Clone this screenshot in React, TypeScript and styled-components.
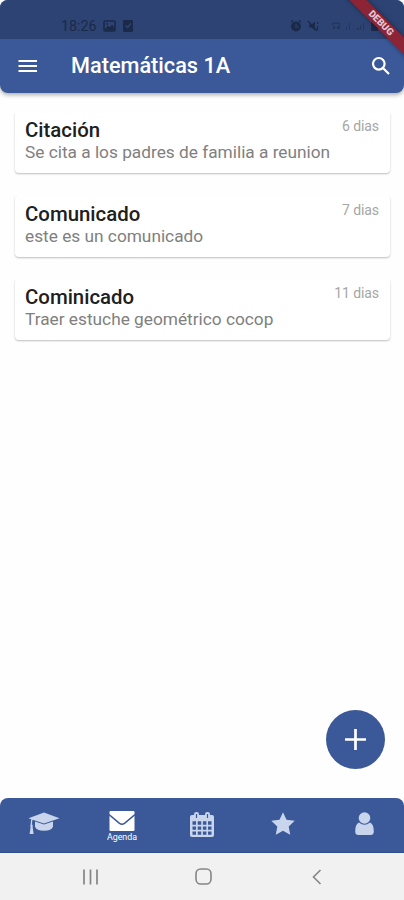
import React from 'react';
import styled, { createGlobalStyle } from 'styled-components';

const blue = '#3b5998';
const pale = '#c9d5ec';

const GlobalStyle = createGlobalStyle`
  * { box-sizing: border-box; }
  html, body { margin: 0; background: #fefefe; }
  body { font-family: Roboto, "Liberation Sans", sans-serif; overflow: hidden; }
  svg { display: block; flex: none; }
`;

const Screen = styled.div`
  position: relative;
  width: 404px;
  height: 900px;
  display: flex;
  flex-direction: column;
  overflow: hidden;
  background: #fefefe;
`;

const Header = styled.header`
  height: 93px;
  flex: none;
  background: ${blue};
  border-radius: 8px;
  box-shadow: 0 2px 4px rgba(0, 0, 0, 0.32);
  overflow: hidden;
`;

const StatusBar = styled.div`
  height: 39px;
  padding: 13px 25px 0 61px;
  display: flex;
  align-items: center;
  justify-content: space-between;
  background: #2d4373;
  color: #1b2a49;
`;

const StatusGroup = styled.div<{ $gap: number }>`
  display: flex;
  align-items: center;
  gap: ${({ $gap }) => $gap}px;
`;

const Clock = styled.span`
  width: 35px;
  font-size: 14.3px;
  line-height: 16px;
  white-space: nowrap;
`;

const Toolbar = styled.div`
  height: 54px;
  padding: 0 13px 0 18px;
  display: flex;
  align-items: center;
  color: #fff;
`;

const Title = styled.h1`
  flex: 1;
  margin: 0 0 0 33px;
  font-size: 21.7px;
  line-height: 26px;
  font-weight: 500;
  white-space: nowrap;
`;

const Banner = styled.div`
  position: absolute;
  left: 331px;
  top: 17px;
  width: 100px;
  height: 12px;
  transform: rotate(45deg);
  background: #8c2436;
  color: #e3c6cf;
  font-size: 9.7px;
  line-height: 12px;
  font-weight: 900;
  text-align: center;
  box-shadow: 0 0 5px rgba(0, 0, 0, 0.4);
`;

const List = styled.main`
  flex: 1;
  padding: 18px 14px 0 15px;
  display: flex;
  flex-direction: column;
  gap: 21.5px;
`;

const Card = styled.article`
  height: 62px;
  padding: 7px 11px 0 10px;
  border-radius: 4px;
  background: #fff;
  box-shadow: 0 1px 2px rgba(0, 0, 0, 0.26);
  clip-path: inset(2px -4px -4px -4px);
`;

const CardTop = styled.div`
  display: flex;
  justify-content: space-between;
  height: 24px;
`;

const CardTitle = styled.h2`
  margin: 0;
  font-size: 20.4px;
  line-height: 24px;
  font-weight: 500;
  color: #202020;
`;

const Age = styled.span`
  font-size: 14px;
  letter-spacing: -0.1px;
  line-height: 17px;
  color: #a6a6a6;
`;

const Message = styled.p`
  margin: 0;
  font-size: 17.28px;
  line-height: 20px;
  color: #808080;
  white-space: nowrap;
`;

const AddButton = styled.button`
  position: absolute;
  left: 326px;
  top: 710px;
  width: 59px;
  height: 59px;
  padding: 0;
  border: 0;
  border-radius: 50%;
  display: grid;
  place-items: center;
  background: ${blue};
  color: #fff;
`;

const Tabs = styled.nav`
  height: 55px;
  flex: none;
  padding: 0 0 0 4px;
  display: grid;
  grid-template-columns: 80px 76px 83px 80px 82px;
  background: ${blue};
  border-bottom: 1px solid #304d8b;
  border-radius: 8px 8px 0 0;
`;

const Tab = styled.div<{ $active?: boolean }>`
  display: flex;
  flex-direction: column;
  align-items: center;
  padding-top: ${({ $active }) => ($active ? 13 : 14)}px;
  color: ${({ $active }) => ($active ? '#fff' : pale)};
`;

const TabLabel = styled.span`
  font-size: 8.9px;
  line-height: 10px;
  margin-top: 1px;
`;

const SystemBar = styled.footer`
  height: 47px;
  flex: none;
  padding: 0 82px;
  display: grid;
  grid-template-columns: 113px 117px 10px;
  align-items: center;
  background: #f1f1f1;
  color: #858585;
`;

const notices = [
  { title: 'Citación', age: '6 dias', text: 'Se cita a los padres de familia a reunion' },
  { title: 'Comunicado', age: '7 dias', text: 'este es un comunicado' },
  { title: 'Cominicado', age: '11 dias', text: 'Traer estuche geométrico cocop' },
];

const PhotoIcon = () => (
  <svg width="13" height="12" viewBox="0 0 13 12" fill="none" stroke="currentColor">
    <rect x="1" y="1" width="11" height="10" rx="1" strokeWidth="1.6" />
    <path d="M2 10l3-4 2 2 2-3 3 5z" fill="currentColor" />
    <circle cx="4" cy="4" r=".6" />
  </svg>
);

const TaskIcon = () => (
  <svg width="10" height="12" viewBox="0 0 10 12">
    <rect width="10" height="12" rx="1" fill="currentColor" />
    <path d="M2.5 5.5l2 2 3.5-4" fill="none" stroke="#2d4373" strokeWidth="1.4" />
  </svg>
);

const AlarmIcon = () => (
  <svg width="12" height="12" viewBox="0 0 12 12">
    <circle cx="6" cy="6.5" r="5" fill="currentColor" />
    <path d="M1 2l2-1.5M11 2L9 .5" stroke="currentColor" strokeWidth="1.5" />
    <path d="M6 4v3h2.5" fill="none" stroke="#2d4373" strokeWidth="1.2" />
  </svg>
);

const MuteIcon = () => (
  <svg width="13" height="12" viewBox="0 0 13 12">
    <path d="M2 4.5h2.5L8 1.5v9l-3.5-3H2z" fill="currentColor" />
    <path d="M1 1l9 10M10.5 2v2M10.5 6v4" stroke="currentColor" strokeWidth="1.2" />
  </svg>
);

const SignalIcons = () => (
  <svg width="54" height="12" viewBox="0 0 54 12" fill="currentColor">
    <g opacity=".5">
      <path d="M6 4q5-4 10 0l-1 1q-4-3-8 0zM8 6h2v3H8zM12 6h3v3h-3zM21 7h1v3h-1zM24 3h1v7h-1zM32 8h2v2h-2zM35 5h1v5h-1zM38 3h1v7h-1z" />
    </g>
    <rect x="46" y="2" width="7" height="9" rx="1" />
  </svg>
);

const MenuIcon = () => (
  <svg width="20" height="14" viewBox="0 0 20 14" stroke="currentColor" strokeWidth="2">
    <path d="M.5 2h18.5M.5 7h18.5M.5 12h18.5" />
  </svg>
);

const SearchIcon = () => (
  <svg width="20" height="20" viewBox="0 0 20 20" fill="none" stroke="currentColor" strokeWidth="2.2">
    <circle cx="7.8" cy="7.8" r="5.8" />
    <path d="M12 12l6 6" />
  </svg>
);

const PlusIcon = () => (
  <svg width="21" height="21" viewBox="0 0 21 21" stroke="currentColor" strokeWidth="2.7">
    <path d="M10.5 0v21M0 10.5h21" />
  </svg>
);

const CapIcon = () => (
  <svg width="32" height="24" viewBox="0 0 32 24" fill="currentColor">
    <path d="M16 0.5L31.5 6.2 16 11.4 4.5 7.7Q4 8.6 4.1 12.5Q5.2 13.2 4.6 14.8L5.6 22H1.6L2.6 15Q1.7 13.6 2.7 12.5Q2.6 9 3.3 7.3L.5 6.2z" />
    <path d="M7 9.6l9 3 9-3v5.2q-1.5 4-9 4t-9-4z" />
  </svg>
);

const MailIcon = () => (
  <svg width="26" height="20" viewBox="0 0 26 20">
    <rect x=".5" y="0" width="25" height="20" rx="1" fill="currentColor" />
    <path d="M0 3.5l10.5 8.8q2.5 1.8 5 0L26 3.5" fill="none" stroke={blue} strokeWidth="1.5" />
  </svg>
);

const CalendarIcon = () => (
  <svg width="24" height="26" viewBox="0 0 24 26">
    <rect y="3" width="24" height="22" rx="2" fill="currentColor" />
    <rect x="4" y="0" width="5" height="8" rx="2.3" fill="currentColor" />
    <rect x="15" y="0" width="5" height="8" rx="2.3" fill="currentColor" />
    <path d="M6.5 2v4M17.5 2v4" stroke={blue} strokeWidth="1.2" />
    <path
      d="M2.5 9.3h3.5v3.4H2.5zM7.7 9.3h3.5v3.4H7.7zM12.9 9.3h3.5v3.4h-3.5zM18 9.3h3.5v3.4h-3.5zM2.5 14.4h3.5v3.4H2.5zM7.7 14.4h3.5v3.4H7.7zM12.9 14.4h3.5v3.4h-3.5zM18 14.4h3.5v3.4h-3.5zM2.5 19.5h3.5v3.2H2.5zM7.7 19.5h3.5v3.2H7.7zM12.9 19.5h3.5v3.2h-3.5zM18 19.5h3.5v3.2h-3.5z"
      fill={blue}
    />
  </svg>
);

const StarIcon = () => (
  <svg width="24" height="24" viewBox="0 0 24 24" fill="currentColor">
    <path d="M12 .3l3.5 7.4 8.2 1.1-6 5.7 1.5 8.3L12 18.8l-7.2 4 1.5-8.3-6-5.7 8.2-1.1z" />
  </svg>
);

const PersonIcon = () => (
  <svg width="19" height="24" viewBox="0 0 19 24" fill="currentColor">
    <path d="M4 10.5Q9.5 15 15 10.5 18.8 12 18.8 19.5 18.8 23 15.5 23h-12Q.2 23 .2 19.5.2 12 4 10.5z" />
    <circle cx="9.5" cy="6" r="5.8" />
  </svg>
);

const RecentsIcon = () => (
  <svg width="17" height="16" viewBox="0 0 17 16" stroke="currentColor" strokeWidth="1.7">
    <path d="M2 .5v15M8.5 .5v15M15 .5v15" />
  </svg>
);

const HomeIcon = () => (
  <svg width="17" height="17" viewBox="0 0 17 17" fill="none" stroke="currentColor" strokeWidth="1.6">
    <rect x="1" y="1" width="15" height="15" rx="4.7" />
  </svg>
);

const BackIcon = () => (
  <svg width="10" height="16" viewBox="0 0 10 16" fill="none" stroke="currentColor" strokeWidth="1.6">
    <path d="M8.5 1L1.5 8l7 7" />
  </svg>
);

export default function App() {
  return (
    <>
      <GlobalStyle />
      <Screen>
        <Header>
          <StatusBar>
            <StatusGroup $gap={7}>
              <Clock>18:26</Clock>
              <PhotoIcon />
              <TaskIcon />
            </StatusGroup>
            <StatusGroup $gap={5}>
              <AlarmIcon />
              <MuteIcon />
              <SignalIcons />
            </StatusGroup>
          </StatusBar>
          <Toolbar>
            <MenuIcon />
            <Title>Matemáticas 1A</Title>
            <SearchIcon />
          </Toolbar>
        </Header>
        <List>
          {notices.map((n) => (
            <Card key={n.title}>
              <CardTop>
                <CardTitle>{n.title}</CardTitle>
                <Age>{n.age}</Age>
              </CardTop>
              <Message>{n.text}</Message>
            </Card>
          ))}
        </List>
        <Tabs>
          <Tab><CapIcon /></Tab>
          <Tab $active>
            <MailIcon />
            <TabLabel>Agenda</TabLabel>
          </Tab>
          <Tab><CalendarIcon /></Tab>
          <Tab><StarIcon /></Tab>
          <Tab><PersonIcon /></Tab>
        </Tabs>
        <SystemBar>
          <RecentsIcon />
          <HomeIcon />
          <BackIcon />
        </SystemBar>
        <AddButton aria-label="+"><PlusIcon /></AddButton>
        <Banner>DEBUG</Banner>
      </Screen>
    </>
  );
}
